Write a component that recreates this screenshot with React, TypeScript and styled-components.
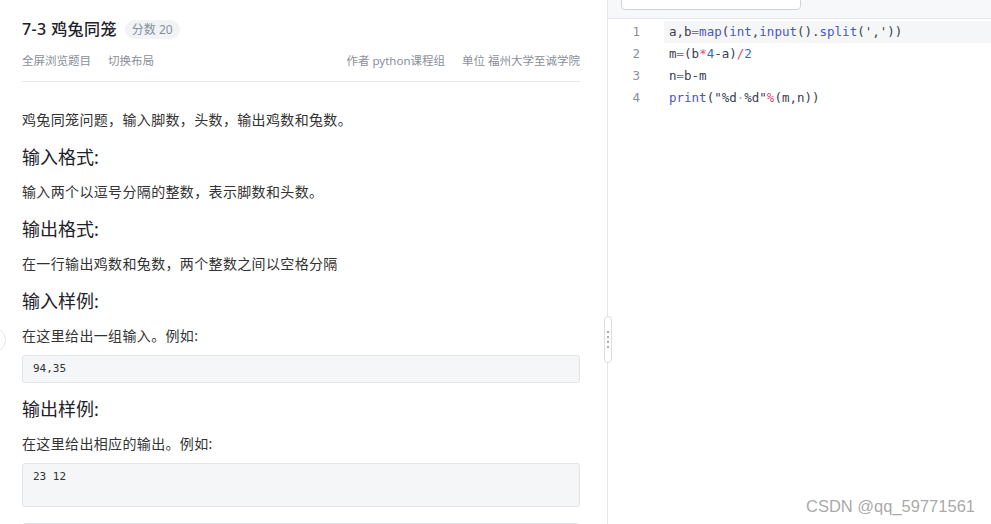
import * as React from 'react'
import styled, { createGlobalStyle } from 'styled-components'

const GlobalStyle = createGlobalStyle`
  html, body {
    margin: 0;
    padding: 0;
    height: 524px;
    overflow: hidden;
    background: #fff;
  }
  body {
    font-family: "Noto Sans", "Noto Sans CJK SC", sans-serif;
    color: #333;
    text-spacing-trim: space-all;
  }
`

type Tok = { t: string; k?: 'fn' | 'op' | 'num' | 'ws' }

const codeLines: Tok[][] = [
  [
    { t: 'a,b' },
    { t: '=', k: 'op' },
    { t: 'map', k: 'fn' },
    { t: '(' },
    { t: 'int', k: 'fn' },
    { t: ',' },
    { t: 'input', k: 'fn' },
    { t: '().' },
    { t: 'split', k: 'fn' },
    { t: "(','))" },
  ],
  [
    { t: 'm' },
    { t: '=', k: 'op' },
    { t: '(b' },
    { t: '*', k: 'op' },
    { t: '4', k: 'num' },
    { t: '-a)' },
    { t: '/', k: 'op' },
    { t: '2', k: 'num' },
  ],
  [{ t: 'n' }, { t: '=', k: 'op' }, { t: 'b-m' }],
  [
    { t: 'print', k: 'fn' },
    { t: '("%d' },
    { t: '·', k: 'ws' },
    { t: '%d"' },
    { t: '%', k: 'op' },
    { t: '(m,n))' },
  ],
]

const App: React.FC = () => {
  return (
    <>
      <GlobalStyle />
      <Page>
        <LeftPane>
          <CollapseKnob />
          <Header>
            <TitleRow>
              <Title>7-3 鸡兔同笼</Title>
              <Badge>分数 20</Badge>
            </TitleRow>
            <MetaRow>
              <MetaGroup>
                <MetaLink>全屏浏览题目</MetaLink>
                <MetaLink>切换布局</MetaLink>
              </MetaGroup>
              <MetaGroup>
                <MetaLink>作者 python课程组</MetaLink>
                <MetaLink>单位 福州大学至诚学院</MetaLink>
              </MetaGroup>
            </MetaRow>
          </Header>
          <Content>
            <Para>鸡兔同笼问题，输入脚数，头数，输出鸡数和兔数。</Para>
            <Heading>输入格式:</Heading>
            <Para>输入两个以逗号分隔的整数，表示脚数和头数。</Para>
            <Heading>输出格式:</Heading>
            <Para>在一行输出鸡数和兔数，两个整数之间以空格分隔</Para>
            <Heading>输入样例:</Heading>
            <Para>在这里给出一组输入。例如:</Para>
            <Sample>94,35</Sample>
            <Heading>输出样例:</Heading>
            <Para>在这里给出相应的输出。例如:</Para>
            <Sample tall>23 12</Sample>
            <Sample tall />
          </Content>
          <Splitter>
            <Dot />
            <Dot />
            <Dot />
            <Dot />
          </Splitter>
        </LeftPane>
        <RightPane>
          <Toolbar>
            <LangSelect />
          </Toolbar>
          <Editor>
            {codeLines.map((line, i) => (
              <CodeRow key={i}>
                <LineNo>{i + 1}</LineNo>
                <CodeText active={i === 0}>
                  {line.map((tok, j) => (
                    <Token key={j} kind={tok.k}>
                      {tok.t}
                    </Token>
                  ))}
                </CodeText>
              </CodeRow>
            ))}
          </Editor>
        </RightPane>
        <Watermark>CSDN @qq_59771561</Watermark>
      </Page>
    </>
  )
}

export default App

// Styles
const Page = styled.div`
  position: relative;
  display: flex;
  width: 991px;
  height: 524px;
  overflow: hidden;
`

const LeftPane = styled.div`
  position: relative;
  width: 608px;
  flex-shrink: 0;
  border-right: 1px solid #e5e6eb;
  padding: 0 27px 0 22px;
  box-sizing: border-box;
`

const CollapseKnob = styled.div`
  position: absolute;
  left: -18px;
  top: 328px;
  width: 22px;
  height: 22px;
  border: 1px solid #e5e6eb;
  border-radius: 50%;
  background: #fff;
`

const Header = styled.div`
  padding-top: 16px;
  padding-bottom: 10px;
  border-bottom: 1px solid #e8e9ed;
`

const TitleRow = styled.div`
  display: flex;
  align-items: center;
  height: 26px;
`

const Title = styled.h1`
  margin: 0;
  font-size: 16px;
  line-height: 24px;
  font-weight: 500;
  letter-spacing: 0.4px;
  color: #1d2129;
`

const Badge = styled.span`
  margin-left: 8px;
  padding: 0 7px;
  height: 19px;
  line-height: 19px;
  border-radius: 10px;
  background: #f2f3f5;
  color: #86909c;
  font-size: 12px;
`

const MetaRow = styled.div`
  display: flex;
  justify-content: space-between;
  align-items: center;
  margin-top: 9px;
  height: 20px;
`

const MetaGroup = styled.div`
  display: flex;
  gap: 17px;
`

const MetaLink = styled.span`
  font-size: 11.5px;
  line-height: 20px;
  color: #8a8f99;
`

const Content = styled.div`
  padding-top: 27px;
`

const Para = styled.p`
  margin: 0;
  font-size: 14px;
  line-height: 22px;
  letter-spacing: 0.35px;
  color: #333;
`

const Heading = styled.h3`
  margin: 13px 0 11px;
  font-size: 18px;
  line-height: 26px;
  font-weight: 400;
  color: #1d2129;
`

const Sample = styled.pre<{ tall?: boolean }>`
  margin: 8px 0 0;
  padding: 6px 10px ${(p) => (p.tall ? '22px' : '6px')};
  min-height: 14px;
  background: #f5f6f8;
  border: 1px solid #e3e4e8;
  border-radius: 3px;
  font-family: "DejaVu Sans Mono", monospace;
  font-size: 11px;
  line-height: 14px;
  color: #333;

  & + & {
    margin-top: 16px;
  }
`

const Splitter = styled.div`
  position: absolute;
  right: -5px;
  top: 316px;
  width: 6px;
  height: 45px;
  background: #fff;
  border: 1px solid #dcdde1;
  border-radius: 4px;
  display: flex;
  flex-direction: column;
  align-items: center;
  justify-content: center;
  gap: 3px;
`

const Dot = styled.span`
  width: 2px;
  height: 2px;
  border-radius: 50%;
  background: #8a8f99;
`

const RightPane = styled.div`
  flex: 1;
  display: flex;
  flex-direction: column;
  min-width: 0;
`

const Toolbar = styled.div`
  height: 18px;
  flex-shrink: 0;
  background: #f7f8fa;
  border-bottom: 1px solid #e5e6eb;
  padding-left: 13px;
  display: flex;
  align-items: flex-start;
`

const LangSelect = styled.div`
  width: 178px;
  height: 28px;
  margin-top: -20px;
  background: #fff;
  border: 1px solid #d0d3d9;
  border-radius: 4px;
`

const Editor = styled.div`
  padding-top: 2px;
  font-family: "DejaVu Sans Mono", monospace;
  font-size: 12.5px;
`

const CodeRow = styled.div`
  display: flex;
  height: 22px;
  line-height: 22px;
`

const LineNo = styled.span`
  width: 32px;
  padding-right: 24px;
  text-align: right;
  color: #8a8f99;
  flex-shrink: 0;
`

const CodeText = styled.span<{ active?: boolean }>`
  flex: 1;
  padding-left: 5px;
  white-space: pre;
  color: #3b4050;
  background: ${(p) => (p.active ? '#f5f6f8' : 'transparent')};
`

const tokenColor: Record<string, string> = {
  fn: '#4a56c9',
  op: '#e2457c',
  num: '#2f6bd6',
  ws: '#b0b4bc',
}

const Token = styled.span<{ kind?: string }>`
  color: ${(p) => (p.kind ? tokenColor[p.kind] : 'inherit')};
`

const Watermark = styled.div`
  position: absolute;
  right: 16px;
  bottom: 8px;
  font-family: "Liberation Sans", sans-serif;
  font-size: 16.5px;
  color: rgba(130, 130, 130, 0.7);
`
